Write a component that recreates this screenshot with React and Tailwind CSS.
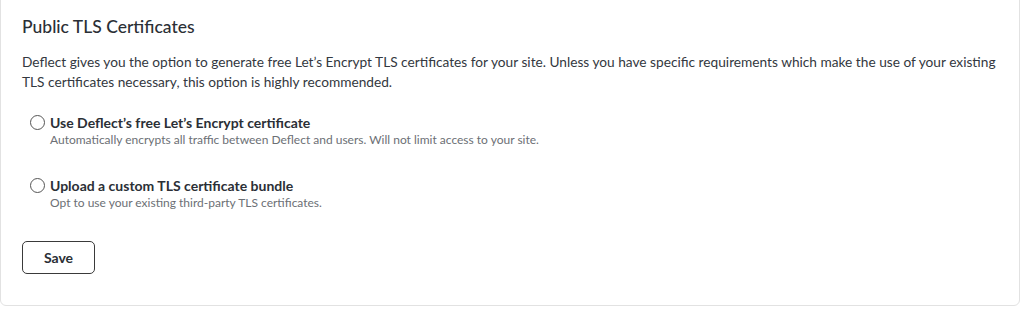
import React from "react";

const options = [
  {
    id: "letsencrypt",
    label: "Use Deflect\u2019s free Let\u2019s Encrypt certificate",
    help: "Automatically encrypts all traffic between Deflect and users. Will not limit access to your site.",
  },
  {
    id: "custom",
    label: "Upload a custom TLS certificate bundle",
    help: "Opt to use your existing third-party TLS certificates.",
  },
];

const App = () => {
  return (
    <div
      className="w-[1024px] h-[309px] bg-white overflow-hidden"
      style={{ fontFamily: "Lato, 'Noto Sans', sans-serif" }}
    >
      <div className="w-[1020px] h-[307px] -mt-[1px] border border-[#e2e2e2] rounded-b-md bg-white px-[21px] pt-[16px] text-[#2b2f36]">
        <h2 className="text-[17.5px] font-medium leading-[22px]">Public TLS Certificates</h2>
        <p className="mt-[14px] text-[13.7px] leading-[20px] text-[#333840]">
          Deflect gives you the option to generate free Let’s Encrypt TLS certificates for your site. Unless you have specific requirements which make the use of your existing TLS certificates necessary, this option is highly recommended.
        </p>
        <div className="mt-[22px] flex flex-col gap-[29px] pl-[8px]">
          {options.map((o) => (
            <label key={o.id} className="flex items-start gap-[5px] cursor-pointer">
              <input
                type="radio"
                name="tls"
                className="appearance-none mt-[1px] w-[15px] h-[15px] rounded-full border border-[#555] bg-white shrink-0"
              />
              <span className="flex flex-col">
                <span className="text-[14px] font-bold leading-[18px] text-[#2b2f36]">{o.label}</span>
                <span className="text-[12px] leading-[16px] text-[#6c6f75]">{o.help}</span>
              </span>
            </label>
          ))}
        </div>
        <button
          type="button"
          className="mt-[30px] w-[73px] h-[33px] rounded-[5px] border border-[#3a3a3a] bg-white text-[14px] font-bold text-[#2b2f36]"
        >
          Save
        </button>
      </div>
    </div>
  );
};

export default App;
